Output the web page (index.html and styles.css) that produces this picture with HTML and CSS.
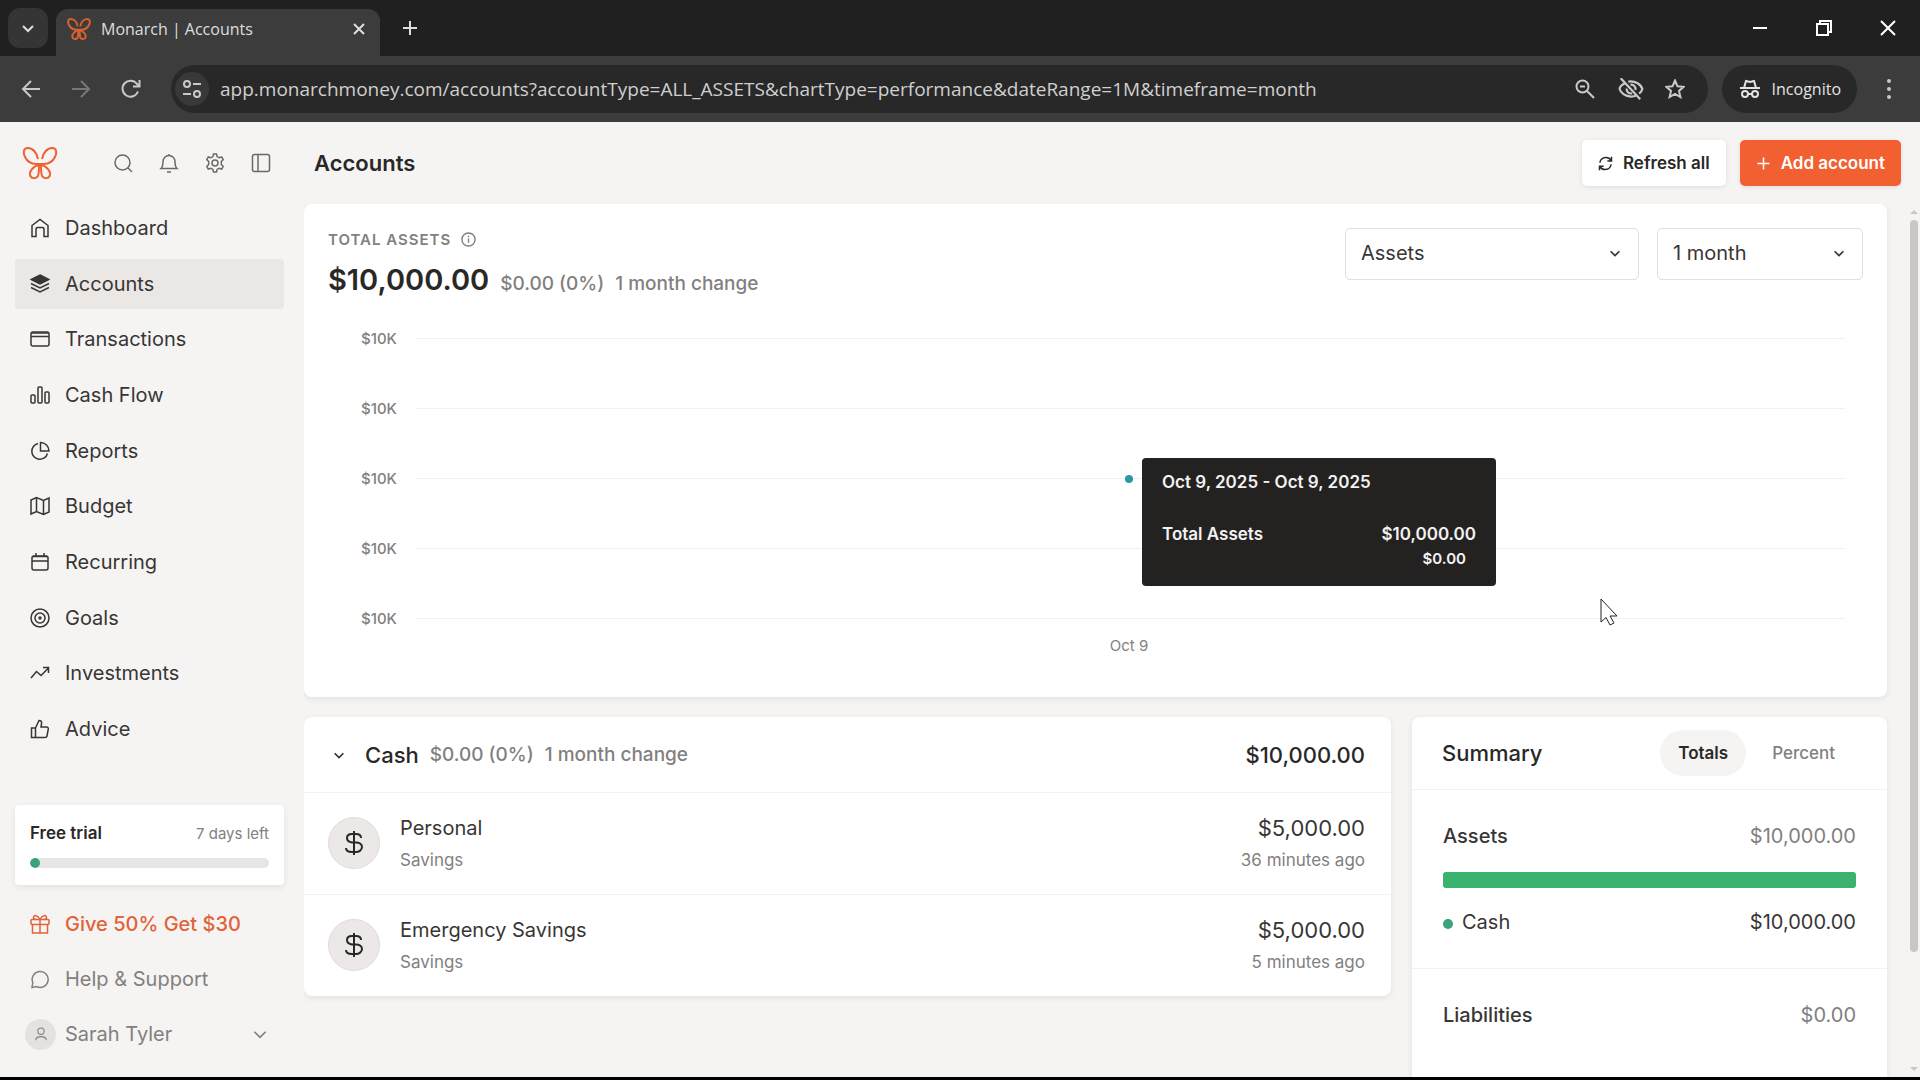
FILE: index.html
```html
<!DOCTYPE html>
<html lang="en">
<head>
    <meta charset="UTF-8">
    <meta name="viewport" content="width=device-width, initial-scale=1.0">
    <title>Monarch | Accounts</title>
    <link rel="stylesheet" href="styles.css">
</head>
<body>
    <svg class="defs" aria-hidden="true">
        <symbol id="chevron" viewBox="0 0 16 16"><path d="M3 6l5 5 5-5"/></symbol>
        <symbol id="butterfly" viewBox="0 0 36 36">
            <path d="M16 14C15 8 11 3 6 3 1 3 1 8 3 12c2 4 6 7 11 7h8c5 0 9-3 11-7 2-4 2-9-3-9-5 0-9 5-10 11"/>
            <path d="M17 20c-4 0-10 6-9 10 1 4 6 4 8 1 1-3 1-7 1-11z"/>
            <path d="M19 20c4 0 10 6 9 10-1 4-6 4-8 1-1-3-1-7-1-11z"/>
        </symbol>
        <symbol id="dollar" viewBox="0 0 24 24"><path d="M12 0v24M19 7c0-3-2-4-5-4h-4c-3 0-5 1-5 4s2 4 5 4.500h4c3 0 6 1.500 6 4.500s-3 5-6 5h-4c-3 0-6-1-6-4"/></symbol>
    </svg>

    <!-- browser -->
    <header class="tab-strip">
        <button class="tab-search" aria-label="Search tabs"><svg viewBox="0 0 16 16"><use href="#chevron"/></svg></button>
        <div class="tab">
            <svg class="favicon" viewBox="0 0 36 36"><use href="#butterfly"/></svg>
            <span class="tab-title">Monarch | Accounts</span>
            <button aria-label="Close tab"><svg viewBox="0 0 16 16"><path d="M3 3l10 10M13 3L3 13"/></svg></button>
        </div>
        <button class="new-tab" aria-label="New tab"><svg viewBox="0 0 16 16"><path d="M8 1v14M1 8h14"/></svg></button>
        <div class="window-controls">
            <button aria-label="Minimize"><svg viewBox="0 0 16 16"><path d="M1 8h14"/></svg></button>
            <button aria-label="Restore"><svg viewBox="0 0 16 16"><path d="M1 4h11v11H1zM4 4V1h11v11h-3"/></svg></button>
            <button aria-label="Close"><svg viewBox="0 0 16 16"><path d="M1 1l14 14M15 1L1 15"/></svg></button>
        </div>
    </header>
    <div class="toolbar">
        <button aria-label="Back"><svg viewBox="0 0 20 20"><path d="M19 10H2M10 2l-8 8 8 8"/></svg></button>
        <button class="disabled" aria-label="Forward" disabled><svg viewBox="0 0 20 20"><path d="M1 10h17M10 2l8 8-8 8"/></svg></button>
        <button aria-label="Reload"><svg viewBox="0 0 20 20"><path d="M17 12.500A8 8 0 1 1 16 5l2 2M18.500 1v6.500H12"/></svg></button>
        <div class="omnibox">
            <button class="site-info" aria-label="Site information"><svg viewBox="0 0 20 20"><circle cx="5" cy="5" r="3"/><path d="M11 5h8M1 15h8"/><circle cx="15" cy="15" r="3"/></svg></button>
            <input type="text" aria-label="Address" value="app.monarchmoney.com/accounts?accountType=ALL_ASSETS&amp;chartType=performance&amp;dateRange=1M&amp;timeframe=month">
            <button aria-label="Zoom"><svg viewBox="0 0 20 20"><circle cx="7.500" cy="7.500" r="6"/><path d="M12 12l7 7M5 7.500h5"/></svg></button>
            <button class="wide" aria-label="Third-party cookies blocked"><svg viewBox="0 0 24 20"><path d="M7 4.500C3.500 6 1.500 8.500 1.500 10c1 3.500 5 7 10.500 7 2 0 4-.5 5.500-1.200M9.500 3.200c6-1.200 11.500 2.300 13 6.800-.4 1.500-1.500 3-3 4.200"/><path d="M8 9.500a4 4 0 0 0 5 4.500M11.500 6a4 4 0 0 1 4.500 5"/><path d="M2.500 0l18 19.500"/></svg></button>
            <button aria-label="Bookmark"><svg viewBox="0 0 20 20"><path d="M10 1.500l2.500 5.800 6.200.5-4.700 4.100 1.400 6.100L10 14.800 4.600 18 6 11.900 1.300 7.800l6.200-.5z"/></svg></button>
        </div>
        <button class="incognito"><svg viewBox="0 0 20 20"><path d="M0 9h20M4 9l2-7 4 1 4-1 2 7"/><circle cx="5" cy="15" r="3"/><circle cx="15" cy="15" r="3"/><path d="M8 15h4"/></svg>Incognito</button>
        <button class="menu-dots" aria-label="Menu"><svg viewBox="0 0 4 20"><circle cx="2" cy="2" r="2"/><circle cx="2" cy="10" r="2"/><circle cx="2" cy="18" r="2"/></svg></button>
    </div>

    <!-- app -->
    <div class="app">
        <aside class="sidebar">
            <div class="sidebar-top">
                <a href="#" class="logo" aria-label="Monarch"><svg viewBox="0 0 36 36"><use href="#butterfly"/></svg></a>
                <button aria-label="Search"><svg viewBox="0 0 20 20"><circle cx="9.500" cy="9.500" r="7.500"/><path d="M15 15l4 4"/></svg></button>
                <button aria-label="Notifications"><svg viewBox="0 0 20 20"><path d="M2 15.500c2-2 2-4 2-7a6 6 0 0 1 12 0c0 3 0 5 2 7zM8 19h4M10 1v1"/></svg></button>
                <button aria-label="Settings"><svg viewBox="0 0 20 20"><path d="M8.500 1h3l.6 2.600 2 1.200 2.600-.8 1.500 2.600-1.900 1.900v3l1.900 1.900-1.500 2.600-2.600-.8-2 1.200-.6 2.600h-3l-.6-2.600-2-1.200-2.600.8-1.500-2.600 1.900-1.900v-3L1.800 6.600 3.300 4l2.600.8 2-1.200z"/><circle cx="10" cy="10" r="3"/></svg></button>
                <button aria-label="Toggle sidebar"><svg viewBox="0 0 20 20"><rect x="1.500" y="1.500" width="17" height="17" rx="2"/><path d="M7 1.500v17"/></svg></button>
            </div>
            <nav class="nav nav-main">
                <a href="#"><svg viewBox="0 0 20 20"><path d="M2 7.500L10 1.500l8 6v11h-4V11c0-1-.5-1.500-1.500-1.500h-5C6.500 9.500 6 10 6 11v7.500H2z"/></svg>Dashboard</a>
                <a href="#" class="active"><svg viewBox="0 0 20 20"><path class="solid" d="M10 1l9 4.500-9 4.500-9-4.500z"/><path d="M1 9.500l9 4.500 9-4.500M1 13.500l9 4.500 9-4.500"/></svg>Accounts</a>
                <a href="#"><svg viewBox="0 0 20 20"><rect x="1" y="3" width="18" height="14" rx="2"/><path d="M1 7.500h18M2 4h16"/></svg>Transactions</a>
                <a href="#"><svg viewBox="0 0 20 20"><rect x="1" y="10" width="4" height="8" rx="1"/><rect x="8" y="2" width="4" height="16" rx="1"/><rect x="15" y="7" width="4" height="11" rx="1"/></svg>Cash Flow</a>
                <a href="#"><svg viewBox="0 0 20 20"><path d="M8 2.500a8 8 0 1 0 9.500 10"/><path d="M10.500 1.500v8.500H19a8.500 8.500 0 0 0-8.500-8.500z"/></svg>Reports</a>
                <a href="#"><svg viewBox="0 0 20 20"><path d="M1 4l5.500-2.500 7 3L19 2v14l-5.500 2.500-7-3L1 18zM6.500 1.500v14M13.500 4.500v14"/></svg>Budget</a>
                <a href="#"><svg viewBox="0 0 20 20"><rect x="2" y="4" width="16" height="14" rx="2"/><path d="M2 9h16M6 1v3M14 1v3M3 4.500h14"/></svg>Recurring</a>
                <a href="#"><svg viewBox="0 0 20 20"><circle cx="10" cy="10" r="9"/><circle cx="10" cy="10" r="5"/><circle cx="10" cy="10" r="1"/></svg>Goals</a>
                <a href="#"><svg viewBox="0 0 20 20"><path d="M1 15l5.500-6.500 4.500 4L18.500 5M13 4.500h5.500V10"/></svg>Investments</a>
                <a href="#"><svg viewBox="0 0 20 20"><path d="M5.500 9l3.500-7.500c2 0 3 1 2.500 3.500L11 8h5.500c1.500 0 2 1 1.800 2l-1.300 7c-.2 1-1 1.500-2 1.500H5.500zM5.500 9H1.500v9.500h4"/></svg>Advice</a>
            </nav>
            <div class="trial">
                <div class="trial-text"><strong>Free trial</strong><span>7 days left</span></div>
                <div class="trial-track"><div class="trial-bar" style="width: 4%"></div></div>
            </div>
            <div class="nav nav-bottom">
                <a href="#" class="gift"><svg viewBox="0 0 20 20"><rect x="1" y="5.500" width="18" height="5" rx="1"/><path d="M2.500 10.500v8.500h15v-8.500M10 5.500V19M10 5.500C8 1 3.500.5 3.500 3.500c0 1.500 1 2 2 2M10 5.500c2-4.500 6.500-5 6.500-2 0 1.500-1 2-2 2"/></svg>Give 50% Get $30</a>
                <a href="#" class="muted"><svg viewBox="0 0 20 20"><path d="M2 18.500l.8-5A8 8 0 1 1 6.500 17.500z"/></svg>Help &amp; Support</a>
                <a href="#" class="muted user"><span class="avatar"><svg viewBox="0 0 20 20"><circle cx="10" cy="6" r="4.500"/><path d="M2.500 19c0-7 15-7 15 0"/></svg></span>Sarah Tyler<svg class="caret" viewBox="0 0 16 16"><use href="#chevron"/></svg></a>
            </div>
        </aside>

        <main class="main">
            <div class="page-header">
                <h1>Accounts</h1>
                <button class="btn"><svg viewBox="0 0 20 20"><path d="M2.500 9C3 4 7.500 2 11 2c3 0 5 1.500 6.500 4M18 1v5.500h-5.500M17.500 11c-.5 5-5 7-8.500 7-3 0-5-1.500-6.500-4M2 19v-5.500h5.500"/></svg>Refresh all</button>
                <button class="btn btn-primary"><svg viewBox="0 0 20 20"><path d="M10 2v16M2 10h16"/></svg>Add account</button>
            </div>
            <div class="scroll-area">
                <div class="content">
                    <section class="card chart-card">
                        <div class="chart-head">
                            <div class="chart-total">
                                <h2>Total assets <svg viewBox="0 0 16 16"><circle cx="8" cy="8" r="7"/><path d="M8 7v4.500M8 4v1.500"/></svg></h2>
                                <p><strong>$10,000.00</strong><span class="change">$0.00 (0%)</span><span class="change">1 month change</span></p>
                            </div>
                            <div class="select select-type">
                                <select aria-label="Account type"><option>Assets</option></select>
                                <svg viewBox="0 0 16 16"><use href="#chevron"/></svg>
                            </div>
                            <div class="select select-range">
                                <select aria-label="Date range"><option>1 month</option></select>
                                <svg viewBox="0 0 16 16"><use href="#chevron"/></svg>
                            </div>
                        </div>
                        <div class="chart">
                            <div class="line"><span>$10K</span></div>
                            <div class="line"><span>$10K</span></div>
                            <div class="line"><span>$10K</span></div>
                            <div class="line"><span>$10K</span></div>
                            <div class="line"><span>$10K</span></div>
                            <div class="plot">
                                <div class="dot"></div>
                                <div class="tooltip">
                                    <div class="tooltip-date">Oct 9, 2025 - Oct 9, 2025</div>
                                    <div class="tooltip-row"><span>Total Assets</span><span>$10,000.00</span></div>
                                    <div class="tooltip-change">$0.00</div>
                                </div>
                                <svg class="cursor" viewBox="0 0 18 28"><path d="M1 1v23l5-4.500 4 7.500 4-2-4-7h7z"/></svg>
                            </div>
                        </div>
                        <div class="x-axis">Oct 9</div>
                    </section>

                    <div class="columns">
                        <section class="card accounts">
                            <div class="group-head">
                                <svg viewBox="0 0 16 16"><use href="#chevron"/></svg>
                                <h3>Cash</h3><span class="change">$0.00 (0%)</span><span class="change">1 month change</span>
                                <strong>$10,000.00</strong>
                            </div>
                            <div class="account">
                                <div class="account-icon"><svg viewBox="0 0 24 24"><use href="#dollar"/></svg></div>
                                <div class="account-name">Personal<small>Savings</small></div>
                                <div class="account-value">$5,000.00<small>36 minutes ago</small></div>
                            </div>
                            <div class="account">
                                <div class="account-icon"><svg viewBox="0 0 24 24"><use href="#dollar"/></svg></div>
                                <div class="account-name">Emergency Savings<small>Savings</small></div>
                                <div class="account-value">$5,000.00<small>5 minutes ago</small></div>
                            </div>
                        </section>

                        <section class="card summary">
                            <div class="summary-head">
                                <h3>Summary</h3>
                                <button class="selected">Totals</button>
                                <button>Percent</button>
                            </div>
                            <div class="summary-block">
                                <div class="summary-row"><strong>Assets</strong><span class="gray">$10,000.00</span></div>
                                <div class="summary-bar"></div>
                                <div class="summary-row item"><span>Cash</span><span>$10,000.00</span></div>
                            </div>
                            <div class="summary-block">
                                <div class="summary-row"><strong>Liabilities</strong><span class="gray">$0.00</span></div>
                            </div>
                        </section>
                    </div>
                </div>
                <div class="scrollbar"><i class="up"></i><div class="thumb"></div><i class="down"></i></div>
            </div>
        </main>
    </div>
</body>
</html>
```
FILE: styles.css
```css
:root {
    --bg: #f5f4f3;
    --card: #ffffff;
    --text: #383635;
    --dark: #2a2827;
    --gray: #82807f;
    --line: #f3f2f1;
    --orange: #f25f30;
    --green: #3bb26f;
    --chrome-dark: #202020;
    --chrome: #3c3c3c;
}

* {
    margin: 0;
    padding: 0;
    box-sizing: border-box;
}

body {
    height: 100vh;
    display: flex;
    flex-direction: column;
    overflow: hidden;
    background: var(--bg);
    color: var(--text);
    font-family: Inter, "Liberation Sans", sans-serif;
    font-size: 20px;
    border-bottom: 3px solid #000;
}

button,
input,
select {
    border: none;
    background: none;
    color: inherit;
    font: inherit;
}

a {
    color: inherit;
    text-decoration: none;
}

svg {
    flex: none;
    width: 20px;
    height: 20px;
    fill: none;
    stroke: currentColor;
    stroke-width: 2;
}

.defs {
    position: absolute;
    width: 0;
    height: 0;
}

/* browser */
.tab-strip {
    flex: none;
    display: flex;
    align-items: center;
    height: 56px;
    padding-left: 8px;
    background: var(--chrome-dark);
    color: #dedede;
    font-family: "Open Sans", sans-serif;
    font-size: 16px;
}

.tab-strip button {
    display: grid;
    place-items: center;
}

.tab-strip svg {
    width: 16px;
    height: 16px;
}

.tab-search {
    width: 40px;
    height: 40px;
    border-radius: 12px;
    background: #353535;
}

.tab {
    display: flex;
    align-items: center;
    align-self: flex-end;
    width: 324px;
    height: 47px;
    margin-left: 8px;
    padding: 0 13px 8px 11px;
    border-radius: 12px 12px 0 0;
    background: var(--chrome);
}

.tab .favicon {
    width: 24px;
    height: 24px;
    margin-right: 10px;
    color: #d9602f;
    stroke-width: 3;
}

.tab-title {
    flex: 1;
}

.new-tab {
    width: 60px;
    height: 40px;
}

.window-controls {
    display: flex;
    margin-left: auto;
}

.window-controls button {
    width: 64px;
    height: 56px;
    color: #fff;
}

.toolbar {
    flex: none;
    display: flex;
    align-items: center;
    height: 66px;
    padding: 0 24px 0 21px;
    background: var(--chrome);
    color: #c9c9c9;
    font-family: "Open Sans", sans-serif;
}

.toolbar button {
    display: grid;
    place-items: center;
    width: 20px;
    margin-right: 30px;
}

.toolbar .disabled {
    color: #787878;
}

.omnibox {
    flex: 1;
    display: flex;
    align-items: center;
    height: 48px;
    border-radius: 24px;
    background: #282828;
}

.omnibox input {
    flex: 1;
    min-width: 0;
    outline: none;
    color: #cfcfcf;
    font-size: 19px;
}

.omnibox button {
    width: 24px;
    margin-right: 21px;
}

.omnibox .wide svg {
    width: 26px;
    height: 22px;
}

.omnibox .site-info {
    width: 34px;
    height: 34px;
    margin: 0 11px 0 4px;
    border-radius: 50%;
    background: #383838;
}

.toolbar .incognito {
    display: flex;
    align-items: center;
    gap: 12px;
    width: auto;
    height: 48px;
    margin: 0 25px 0 14px;
    padding: 0 16px 0 18px;
    border-radius: 24px;
    background: #282828;
    color: #e3e3e3;
    font-size: 16px;
}

.toolbar .menu-dots {
    width: 14px;
    margin: 0;
}

.menu-dots svg {
    width: 4px;
    fill: currentColor;
    stroke: none;
}

/* sidebar */
.app {
    flex: 1;
    min-height: 0;
    display: flex;
}

.sidebar {
    flex: none;
    width: 304px;
    padding: 0 20px 0 15px;
}

.sidebar-top {
    display: flex;
    align-items: center;
    height: 81px;
    padding-left: 7px;
    gap: 26px;
    color: #6b6968;
}

.sidebar-top button {
    display: grid;
    width: 20px;
}

.sidebar svg {
    stroke-width: 1.5;
}

.sidebar-top .logo {
    margin-right: 29px;
    height: 36px;
    color: var(--orange);
}

.sidebar .logo svg {
    width: 36px;
    height: 36px;
    stroke-width: 2;
}

.nav {
    display: flex;
    flex-direction: column;
    justify-content: space-between;
    gap: 5px;
}

.nav-main {
    height: 551px;
}

.nav a {
    display: flex;
    align-items: center;
    gap: 15px;
    height: 50px;
    padding: 0 15px;
    border-radius: 4px;
}

.nav .active {
    background: #eae7e5;
}

.nav .solid {
    fill: currentColor;
}

.trial {
    height: 80px;
    margin: 51px 0 14px;
    padding: 15px;
    border-radius: 4px;
    background: var(--card);
    box-shadow: 0 2px 6px rgba(0, 0, 0, 0.08);
}

.trial-text {
    display: flex;
    justify-content: space-between;
    align-items: center;
    height: 26px;
    margin-bottom: 12px;
    font-size: 15px;
    color: var(--gray);
}

.trial-text strong {
    font-size: 17px;
    font-weight: 600;
    color: var(--dark);
}

.trial-track {
    height: 10px;
    border-radius: 5px;
    background: #e8e6e5;
    overflow: hidden;
}

.trial-bar {
    height: 10px;
    border-radius: 5px;
    background: #3ba37a;
}

.nav .gift {
    color: #e0633a;
    font-weight: 500;
}

.nav .muted {
    color: var(--gray);
}

.nav .user {
    gap: 9px;
    padding-left: 10px;
}

.avatar {
    display: grid;
    place-items: center;
    width: 31px;
    height: 31px;
    border-radius: 50%;
    background: #e4e2e1;
}

.avatar svg {
    width: 14px;
    height: 14px;
}

.nav .caret {
    width: 18px;
    height: 18px;
    margin-left: auto;
}

/* main */
.main {
    flex: 1;
    min-width: 0;
    display: flex;
    flex-direction: column;
}

.page-header {
    flex: none;
    display: flex;
    align-items: center;
    gap: 14px;
    height: 82px;
    padding: 0 19px 0 10px;
}

h1 {
    flex: 1;
    font-size: 22px;
    font-weight: 600;
    color: var(--dark);
}

.btn {
    display: flex;
    align-items: center;
    gap: 10px;
    height: 46px;
    padding: 0 16px;
    border-radius: 5px;
    background: var(--card);
    box-shadow: 0 1px 4px rgba(0, 0, 0, 0.1);
    color: var(--dark);
    font-size: 17px;
    font-weight: 600;
}

.btn svg {
    width: 15px;
    height: 15px;
}

.btn-primary {
    background: var(--orange);
    color: #fff;
}

.scroll-area {
    flex: 1;
    min-height: 0;
    display: flex;
}

.content {
    flex: 1;
    min-width: 0;
    overflow: hidden;
    padding-right: 20px;
}

.card {
    border-radius: 8px;
    background: var(--card);
    box-shadow: 0 2px 6px rgba(0, 0, 0, 0.08);
}

.chart-card {
    height: 493px;
    padding: 24px 24px 0;
}

.chart-head {
    display: flex;
    gap: 18px;
    height: 110px;
}

.chart-total {
    flex: 1;
}

h2 {
    display: flex;
    align-items: center;
    gap: 10px;
    height: 22px;
    font-size: 15px;
    font-weight: 600;
    letter-spacing: 1px;
    text-transform: uppercase;
    color: var(--gray);
}

h2 svg {
    width: 15px;
    height: 15px;
    stroke-width: 1.5;
}

.chart-total p {
    display: flex;
    align-items: baseline;
    gap: 11px;
    margin-top: 12px;
    color: var(--gray);
}

.chart-total strong {
    font-size: 29px;
    font-weight: 600;
    color: var(--dark);
}

.change {
    font-size: 19px;
    font-weight: 500;
}

.select {
    position: relative;
    height: 52px;
}

.select select {
    appearance: none;
    width: 100%;
    height: 52px;
    padding: 0 15px 2px;
    border: 1px solid #e3e1e0;
    border-radius: 5px;
}

.select svg {
    position: absolute;
    top: 18px;
    right: 17px;
    width: 14px;
    height: 14px;
    pointer-events: none;
}

.select-type {
    width: 294px;
}

.select-range {
    width: 206px;
}

.chart {
    position: relative;
    display: flex;
    flex-direction: column;
    justify-content: space-between;
    height: 281px;
    margin: 0 18px 0 33px;
}

.line {
    display: flex;
    align-items: center;
    gap: 19px;
    height: 1px;
    font-size: 15px;
    font-weight: 500;
    color: var(--gray);
}

.line span {
    width: 37px;
}

.line::after {
    content: "";
    flex: 1;
    height: 1px;
    background: #f2f1f0;
}

.plot {
    position: absolute;
    top: 0;
    bottom: 0;
    left: 52px;
    right: 0;
}

.dot {
    position: absolute;
    top: 50%;
    left: 50%;
    width: 8px;
    height: 8px;
    margin: -4px;
    border-radius: 50%;
    background: #2a98a5;
}

.tooltip {
    position: absolute;
    top: 120px;
    left: calc(50% + 13px);
    width: 354px;
    height: 128px;
    padding: 14px 20px;
    border-radius: 4px;
    background: #242221;
    color: #f3f2f2;
    font-size: 17px;
    font-weight: 600;
    line-height: 20px;
}

.tooltip-row {
    display: flex;
    justify-content: space-between;
    margin-top: 32px;
}

.tooltip-change {
    margin: 5px 10px 0 0;
    font-size: 15px;
    text-align: right;
}

.cursor {
    position: absolute;
    top: 260px;
    left: 1187px;
    width: 18px;
    height: 28px;
    fill: #fff;
    stroke: #222;
    stroke-width: 1;
}

.x-axis {
    margin: 17px 18px 0 85px;
    font-size: 15px;
    text-align: center;
    color: var(--gray);
}

.columns {
    display: grid;
    grid-template-columns: 1fr 475px;
    align-items: start;
    gap: 21px;
    margin-top: 20px;
}

.group-head {
    display: flex;
    align-items: center;
    gap: 11px;
    height: 75px;
    padding: 0 26px 0 28px;
    color: var(--gray);
}

.group-head svg {
    width: 14px;
    height: 14px;
    margin-right: 8px;
    color: var(--text);
}

h3 {
    font-size: 22px;
    font-weight: 500;
    color: var(--dark);
}

.group-head strong {
    margin-left: auto;
    font-size: 22px;
    font-weight: 500;
    color: var(--dark);
}

.account {
    display: flex;
    align-items: center;
    gap: 20px;
    height: 102px;
    padding: 0 26px 2px 24px;
    border-top: 1px solid var(--line);
}

.account-icon {
    display: grid;
    place-items: center;
    width: 52px;
    height: 52px;
    border-radius: 50%;
    background: #ebe8e7;
    border: 1px solid #dfdcdb;
    color: var(--dark);
}

.account-icon svg {
    width: 24px;
    height: 24px;
}

.account small {
    display: block;
    margin-top: 10px;
    font-size: 17px;
    line-height: 20px;
    color: var(--gray);
}

.account-name {
    flex: 1;
    line-height: 24px;
}

.account-value {
    font-size: 22px;
    line-height: 24px;
    text-align: right;
}

.summary {
    min-height: 440px;
}

.summary-head {
    display: flex;
    align-items: center;
    height: 73px;
    padding: 0 34px 0 30px;
    border-bottom: 1px solid var(--line);
}

.summary-head h3 {
    flex: 1;
}

.summary-head button {
    height: 46px;
    padding: 0 18px;
    border-radius: 23px;
    font-size: 17px;
    font-weight: 500;
    color: var(--gray);
}

.summary-head .selected {
    margin-right: 8px;
    background: #f5f4f3;
    color: var(--dark);
    font-weight: 600;
}

.summary-block {
    padding: 33px 31px;
}

.summary-block + .summary-block {
    border-top: 1px solid var(--line);
}

.summary-row {
    display: flex;
    justify-content: space-between;
    align-items: center;
    height: 26px;
}

.summary-row strong {
    font-weight: 500;
}

.summary-row .gray {
    color: var(--gray);
}

.summary-bar {
    height: 16px;
    margin: 23px 0 21px;
    border-radius: 3px;
    background: var(--green);
}

.item span:first-child::before {
    content: "";
    display: inline-block;
    width: 10px;
    height: 10px;
    margin-right: 9px;
    border-radius: 50%;
    background: #3ba37a;
}

.scrollbar {
    flex: none;
    display: flex;
    flex-direction: column;
    align-items: center;
    width: 13px;
    padding: 6px 0;
}

.scrollbar .thumb {
    width: 8px;
    height: 85%;
    margin: 6px 0 auto;
    border-radius: 4px;
    background: #c9c7c6;
}

.up,
.down {
    border: 4px solid transparent;
}

.up {
    border-top: 0;
    border-bottom: 4px solid #c9c7c6;
}

.down {
    border-bottom: 0;
    border-top: 4px solid #c9c7c6;
}
```
